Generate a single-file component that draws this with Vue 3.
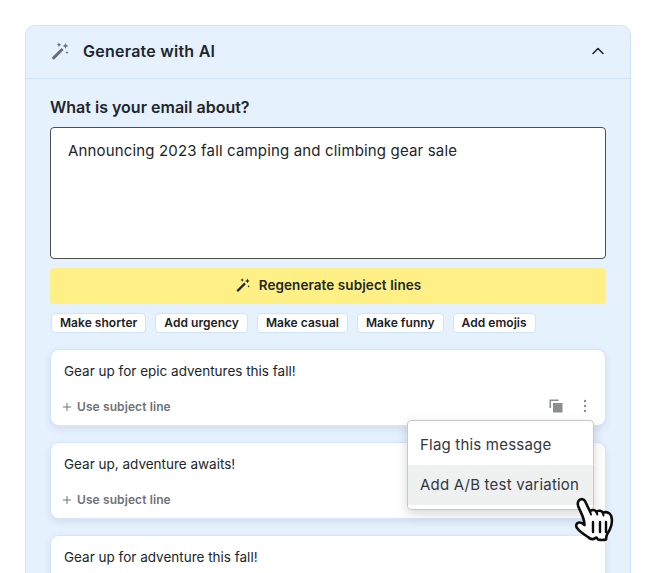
<script setup>
const chips = ['Make shorter', 'Add urgency', 'Make casual', 'Make funny', 'Add emojis']
const lines = [
  { text: 'Gear up for epic adventures this fall!', actions: true },
  { text: 'Gear up, adventure awaits!', actions: false },
  { text: 'Gear up for adventure this fall!', actions: false }
]
</script>

<template>
  <div class="page">
    <section class="panel">
      <header class="head">
        <div class="head-left">
          <svg class="wand" width="20" height="20" viewBox="0 0 20 20" fill="#6a6e73">
            <path d="M11.600 7l2 2L4.400 18.200c-.4.4-1 .4-1.400 0l-.7-.7c-.4-.4-.4-1 0-1.400z" />
            <path d="M9 1.500l.7 1.600 1.600.7-1.600.7L9 6.100l-.7-1.600-1.600-.7 1.600-.7zM15.500 2l.9 2 2 .9-2 .9-.9 2-.9-2-2-.9 2-.9zM17 10l.5 1.100 1.100.5-1.100.5-.5 1.100-.5-1.100-1.100-.5 1.100-.5z" />
          </svg>
          <h2>Generate with AI</h2>
        </div>
        <svg width="16" height="16" viewBox="0 0 16 16" fill="none" stroke="#21262b" stroke-width="1.600" stroke-linecap="round" stroke-linejoin="round">
          <path d="M3 10.500l5-5 5 5" />
        </svg>
      </header>
      <div class="body">
        <label class="label">What is your email about?</label>
        <div class="input">Announcing 2023 fall camping and climbing gear sale</div>
        <button class="regen">
          <svg width="16" height="16" viewBox="0 0 20 20" fill="#21262b">
            <path d="M11.600 7l2 2L4.400 18.200c-.4.4-1 .4-1.400 0l-.7-.7c-.4-.4-.4-1 0-1.400z" />
            <path d="M9 1.500l.7 1.600 1.600.7-1.600.7L9 6.100l-.7-1.600-1.600-.7 1.600-.7zM15.500 2l.9 2 2 .9-2 .9-.9 2-.9-2-2-.9 2-.9zM17 10l.5 1.100 1.100.5-1.100.5-.5 1.100-.5-1.100-1.100-.5 1.100-.5z" />
          </svg>
          Regenerate subject lines
        </button>
        <div class="chips">
          <span v-for="c in chips" :key="c" class="chip">{{ c }}</span>
        </div>
        <div class="cards">
          <article v-for="l in lines" :key="l.text" class="card">
            <p>{{ l.text }}</p>
            <div class="card-foot">
              <span class="use">
                <svg width="8" height="8" viewBox="0 0 8 8" fill="none" stroke="#6e7276" stroke-width="1">
                  <path d="M4 0v8M0 4h8" />
                </svg>
                Use subject line
              </span>
              <span v-if="l.actions" class="actions">
                <svg width="14" height="14" viewBox="0 0 14 14" fill="#8a8d91">
                  <path d="M.5 .5h9v1.500H2V9H.5z" />
                  <rect x="4" y="4" width="9.500" height="9.500" />
                </svg>
                <svg width="4" height="14" viewBox="0 0 4 14" fill="#8a8d91">
                  <circle cx="2" cy="2" r="1.200" /><circle cx="2" cy="7" r="1.200" /><circle cx="2" cy="12" r="1.200" />
                </svg>
              </span>
            </div>
          </article>
        </div>
      </div>
    </section>

    <div class="menu">
      <div class="item">Flag this message</div>
      <div class="item hover">Add A/B test variation</div>
    </div>

    <svg class="hand" width="50" height="52" viewBox="0 0 50 52">
      <path d="M8.500 7c1.500-2.500 5-2.500 6.500 0l5 10.500c1.500-2 5-2 6.500 .5 1.500-2 5.500-1.500 6.500 1 2-1.500 6.500-1 8 2.500 1.500 4 1 9-1 13.500-1 2.500-2.500 4-3.500 7l-.5 3.500c-3 .8-6 .5-8 0l-1.500-2-3 1.500c-2 .5-4-.5-5.500-2-3-2-8-5-11-9-1.500-2-1-5 2-5.500 2-.3 4 1 5.500 2.500 0-7-3.500-12-6-18-.8-2-1.200-4 0-6z" fill="#fff" stroke="#0d0d0d" stroke-width="2.600" stroke-linejoin="round" />
      <path d="M20 17.500l1 3M26.500 18l.8 2.500M33 19l.5 2.500" fill="none" stroke="#0d0d0d" stroke-width="2" stroke-linecap="round" />
      <path d="M23 28v10M30 28v10M36 28v10" fill="none" stroke="#0d0d0d" stroke-width="2.400" stroke-linecap="round" />
    </svg>
  </div>
</template>

<style>
html, body { margin: 0; background: #fff; }
</style>

<style scoped>
.page {
  position: relative;
  width: 656px;
  height: 573px;
  overflow: hidden;
  box-sizing: border-box;
  padding: 25px 25px 0;
  font-family: Inter, "Noto Sans", sans-serif;
  color: #21262b;
}
.panel {
  width: 606px;
  box-sizing: border-box;
  height: 620px;
  background: #e6f1fe;
  border: 1px solid #cfe3fb;
  border-radius: 10px;
}
.head {
  height: 53px;
  box-sizing: border-box;
  display: flex;
  align-items: center;
  justify-content: space-between;
  padding: 0 24px 2px;
  border-bottom: 1px solid #cfe3fb;
}
.head-left { display: flex; align-items: center; gap: 13px; }
.head h2 { margin: 0; font-size: 16px; font-weight: 600; letter-spacing: .25px; }
.body { padding: 18px 24px 0; display: flex; flex-direction: column; }
.label { font-size: 16px; font-weight: 600; line-height: 20px; }
.input {
  margin-top: 10px;
  height: 132px;
  box-sizing: border-box;
  background: #fff;
  border: 1px solid #4a4f55;
  border-radius: 4px;
  padding: 13px 17px;
  font-size: 15px;
  line-height: 20px;
  letter-spacing: .16px;
}
.regen {
  margin-top: 9px;
  height: 36px;
  border: 0;
  border-radius: 4px;
  background: #fff085;
  color: #21262b;
  font: 600 13.500px Inter, "Noto Sans", sans-serif;
  letter-spacing: .08px;
  padding: 0 0 2px;
  display: flex;
  align-items: center;
  justify-content: center;
  gap: 8px;
}
.chips { margin: 9px 0 0 1px; display: flex; gap: 9px; }
.chip {
  height: 20px;
  box-sizing: border-box;
  background: #fff;
  border: 1px solid #cfe3fb;
  border-radius: 4px;
  padding: 0 8px;
  font-size: 12px;
  font-weight: 600;
  line-height: 18px;
  letter-spacing: .04px;
  color: #1c2126;
}
.cards { margin-top: 17px; display: flex; flex-direction: column; gap: 18px; }
.card {
  height: 75px;
  box-sizing: border-box;
  margin: 0 1px;
  background: #fff;
  border-radius: 8px;
  padding: 11px 12px 0 13px;
  box-shadow: 0 0 0 1px #d6e6fb, 0 3px 8px rgba(60, 80, 110, .14);
  display: flex;
  flex-direction: column;
}
.card p { margin: 0; font-size: 13.500px; line-height: 20px; }
.card-foot {
  margin-top: 15px;
  display: flex;
  align-items: center;
  justify-content: space-between;
  height: 20px;
}
.use { display: flex; align-items: center; gap: 6px; padding-top: 1px; font-size: 12px; font-weight: 600; color: #6e7276; letter-spacing: .1px; margin-left: -1px; }
.actions { display: flex; align-items: center; gap: 20px; margin-right: 6px; }
.menu {
  position: absolute;
  left: 407px;
  top: 420px;
  width: 187px;
  height: 90px;
  box-sizing: border-box;
  background: #fff;
  border: 1px solid #c8c8c8;
  border-radius: 4px;
  padding-top: 4px;
  box-shadow: 0 4px 12px rgba(0, 0, 0, .16);
}
.item { height: 40px; line-height: 40px; padding: 0 12px; font-size: 15px; letter-spacing: .2px; color: #33383d; white-space: nowrap; }
.item.hover { background: #eff1f1; }
.hand { position: absolute; left: 570px; top: 494px; }
</style>
